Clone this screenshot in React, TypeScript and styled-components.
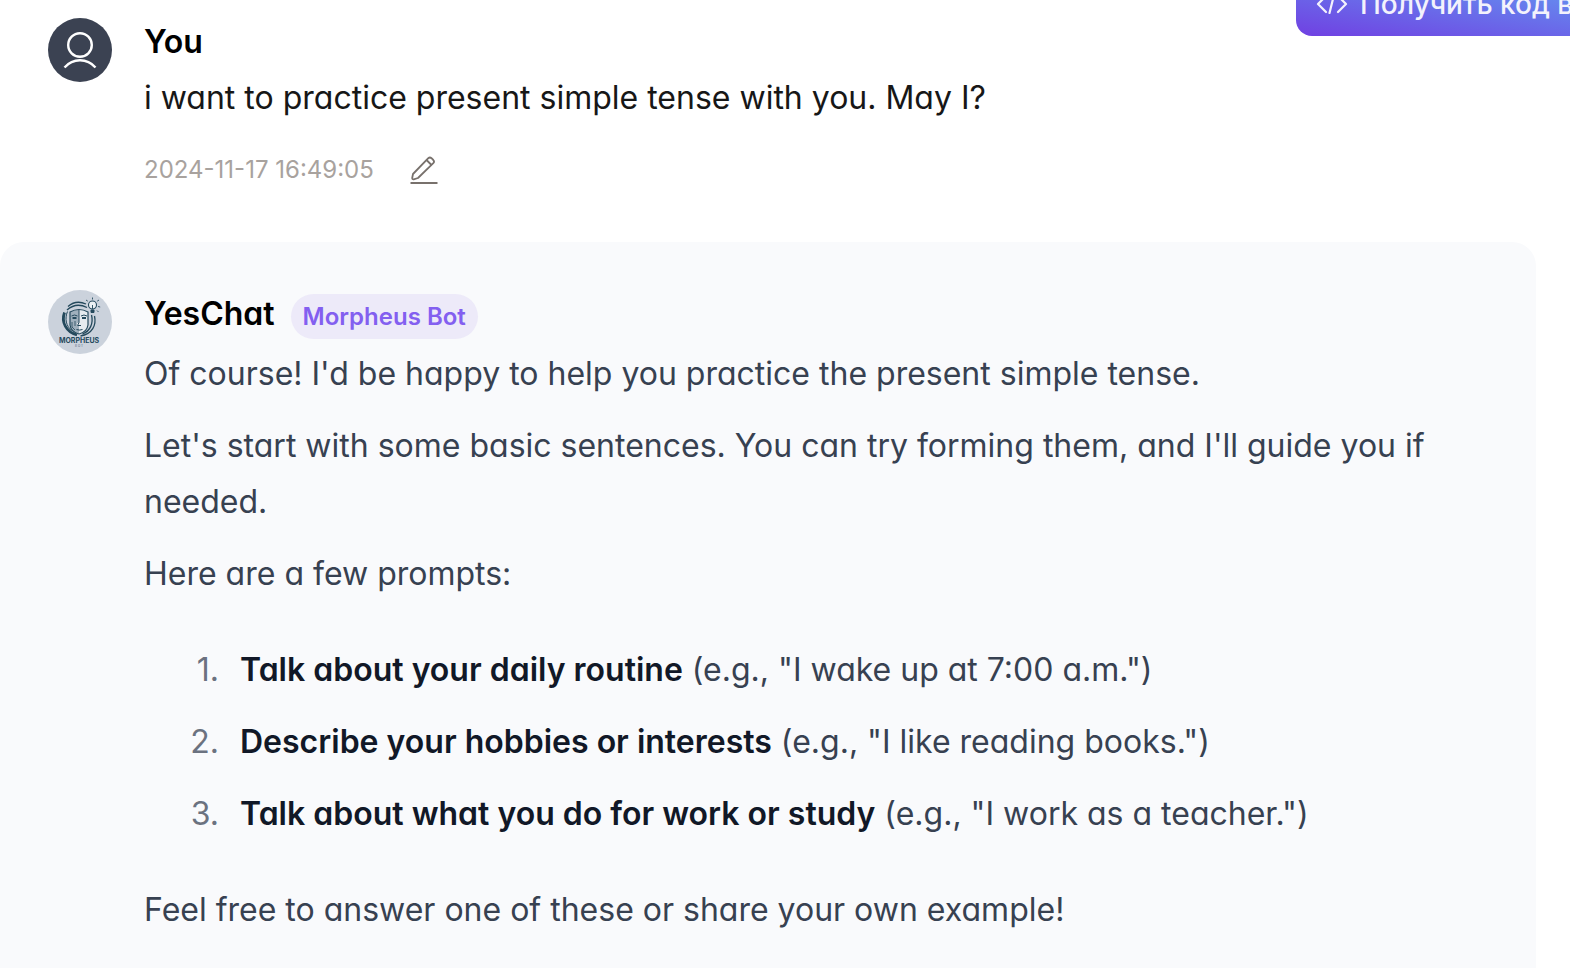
import React from 'react';
import styled, { createGlobalStyle } from 'styled-components';

const GlobalStyle = createGlobalStyle`
  *, *::before, *::after { box-sizing: border-box; }
  body {
    margin: 0;
    background: #fff;
    color: #171717;
    font-family: Inter, "Liberation Sans", sans-serif;
    font-feature-settings: "cv11" 1;
    overflow: hidden;
  }
  p, h2, ol { margin: 0; }
`;

const Page = styled.main`
  position: relative;
  min-height: 100vh;
  padding-right: 34px;
  overflow: hidden;
`;

const EmbedButton = styled.button`
  position: absolute;
  top: -28px;
  right: -124px;
  display: flex;
  align-items: center;
  gap: 12px;
  height: 64px;
  width: 398px;
  padding: 0 20px;
  border: 0;
  border-radius: 16px;
  background: linear-gradient(to top right, #7040e2, #5fb0f5);
  color: #f3f2fc;
  font: 500 28px/40px Inter, "Liberation Sans", sans-serif;
  white-space: nowrap;
`;

const Message = styled.article<{ $reply?: boolean }>`
  display: flex;
  gap: 32px;
  padding: ${p => (p.$reply ? '48px 48px 64px' : '18px 48px 44px')};
  border-radius: 24px;
  background: ${p => (p.$reply ? '#f9fafc' : 'transparent')};
`;

const Avatar = styled.svg`
  flex: none;
  width: 64px;
  height: 64px;
`;

const Body = styled.div`
  flex: 1;
  min-width: 0;
`;

const Header = styled.header`
  display: flex;
  align-items: center;
  gap: 16px;
  height: 48px;
`;

const Name = styled.h2`
  font-size: 32px;
  line-height: 48px;
  font-weight: 600;
  color: #000;
`;

const Badge = styled.span`
  margin-top: 5px;
  padding: 0 12px;
  border-radius: 24px;
  background: #edeaf9;
  color: #835ff0;
  font-size: 24px;
  line-height: 45px;
  font-weight: 600;
`;

const Question = styled.p`
  padding-top: 4px;
  font-size: 32px;
  line-height: 56px;
`;

const Meta = styled.div`
  display: flex;
  align-items: center;
  gap: 34px;
  height: 72px;
  padding-top: 14px;
  color: #a8a29e;
  font-size: 24px;
`;

const EditButton = styled.button`
  display: flex;
  padding: 0;
  border: 0;
  background: none;
  color: #78716c;
`;

const Prose = styled.div`
  display: flex;
  flex-direction: column;
  gap: 16px;
  padding-top: 8px;
  color: #374151;
  font-size: 32px;
  line-height: 56px;
`;

const Prompts = styled.ol`
  display: flex;
  flex-direction: column;
  gap: 16px;
  padding: 24px 0 24px 84px;
`;

const Prompt = styled.li`
  padding-left: 12px;

  &::marker {
    color: #6b7280;
    font-variant-numeric: normal;
  }
`;

const Strong = styled.strong`
  color: #111827;
  font-weight: 600;
`;

const UserAvatar = () => (
  <Avatar viewBox="0 0 64 64" fill="none" stroke="#fff" strokeWidth="2.4" aria-hidden="true">
    <circle cx="32" cy="32" r="32" fill="#3b4252" stroke="none" />
    <circle cx="32" cy="27" r="11.8" />
    <path d="M16.5 49.5C20.5 45 26 42.3 32 42.3s11.500 2.700 15.500 7.200" />
  </Avatar>
);

const BotAvatar = () => (
  <Avatar viewBox="0 0 64 64" fill="none" stroke="#24495c" aria-hidden="true">
    <circle cx="32" cy="32" r="32" fill="#cbd2dc" stroke="none" />
    <path d="M22 22q9-4.500 18 0v13q-1 7-9 9-8-2-9-9z" fill="#e6ebef" stroke="none" />
    <path d="M22 22q4-2.500 9-2.500V33h-2v3h2v8q-8-2-9-9z" fill="#9fb0bd" stroke="none" />
    <path d="M22 22v13q1 7 9 9 8-2 9-9V22q-9-5-18 0z" strokeWidth="1.2" />
    <path d="M31 20v12.500l-1.500 3h3.500M23.500 26q3-2 6 0M33 26q3-2 6 0M28.500 39.500q3 1.200 6 0" strokeWidth="1" />
    <path d="M24.500 28h4M34 28h4" strokeWidth="2" />
    <path d="M24 32v5l3 3M27 31v5" strokeWidth=".8" />
    <path d="M20 16.500Q28 9.500 38 14M19 20Q28 12 39 17.500" strokeWidth="1.3" />
    <path d="M16.500 22.500C13 32 18 42 29 45" strokeWidth="2.8" />
    <path d="M19.500 21.500c-3 7-1.500 15 4.500 19" strokeWidth="1" />
    <path d="M43.500 25c2 8-1 16-9 19M46.500 26c2 9-2 18-14 20" strokeWidth="1.3" />
    <circle cx="44.500" cy="15" r="4" fill="#edf1f4" strokeWidth="1.1" />
    <path d="M43 20h3v2.500h-3z" fill="#24495c" />
    <path d="M44.500 7.500v2M38 10l1.800 1.200M51 10l-1.800 1.200M50 16.500l2.200.5M49 20.500l1.500 1.500M44.500 15v4" strokeWidth=".9" />
    <text x="31" y="53" textAnchor="middle" fill="#24495c" stroke="none" fontSize="7" fontWeight="700">MORPHEUS</text>
    <text x="31.500" y="57" textAnchor="middle" fill="#74889a" stroke="none" fontSize="3" fontWeight="600" letterSpacing="1">BOT</text>
  </Avatar>
);

const EditIcon = () => (
  <svg width="32" height="32" viewBox="0 0 32 32" fill="none" stroke="currentColor" strokeWidth="1.8" strokeLinejoin="round" aria-hidden="true">
    <path d="M5 21 20.300 5.200q1.600-1.400 3.200 0l1.800 1.800q1.500 1.600 0 3.200L10 25l-4.300 1.300q-1.500.200-1.500-1.300z" />
    <path d="m18.500 7 5 5" />
    <path d="M2.500 30h27" strokeWidth="2" />
  </svg>
);

const CodeIcon = () => (
  <svg width="32" height="24" viewBox="0 0 32 24" fill="none" stroke="currentColor" strokeWidth="2.2" strokeLinecap="round" strokeLinejoin="round" aria-hidden="true">
    <path d="m10 4-8 8 8 8M22 4l8 8-8 8M18 3l-4.500 18" />
  </svg>
);

export default function App() {
  return (
    <Page>
      <GlobalStyle />
      <Message>
        <UserAvatar />
        <Body>
          <Header><Name>You</Name></Header>
          <Question>i want to practice present simple tense with you. May I?</Question>
          <Meta>
            <time dateTime="2024-11-17T16:49:05">2024-11-17 16:49:05</time>
            <EditButton type="button" aria-label="Edit message"><EditIcon /></EditButton>
          </Meta>
        </Body>
      </Message>
      <Message $reply>
        <BotAvatar />
        <Body>
          <Header><Name>YesChat</Name><Badge>Morpheus Bot</Badge></Header>
          <Prose>
            <p>Of course! I'd be happy to help you practice the present simple tense.</p>
            <p>Let's start with some basic sentences. You can try forming them, and I'll guide you if needed.</p>
            <p>Here are a few prompts:</p>
            <Prompts>
              <Prompt><Strong>Talk about your daily routine</Strong> (e.g., "I wake up at 7:00 a.m.")</Prompt>
              <Prompt><Strong>Describe your hobbies or interests</Strong> (e.g., "I like reading books.")</Prompt>
              <Prompt><Strong>Talk about what you do for work or study</Strong> (e.g., "I work as a teacher.")</Prompt>
            </Prompts>
            <p>Feel free to answer one of these or share your own example!</p>
          </Prose>
        </Body>
      </Message>
      <EmbedButton type="button"><CodeIcon />Получить код вставки</EmbedButton>
    </Page>
  );
}
